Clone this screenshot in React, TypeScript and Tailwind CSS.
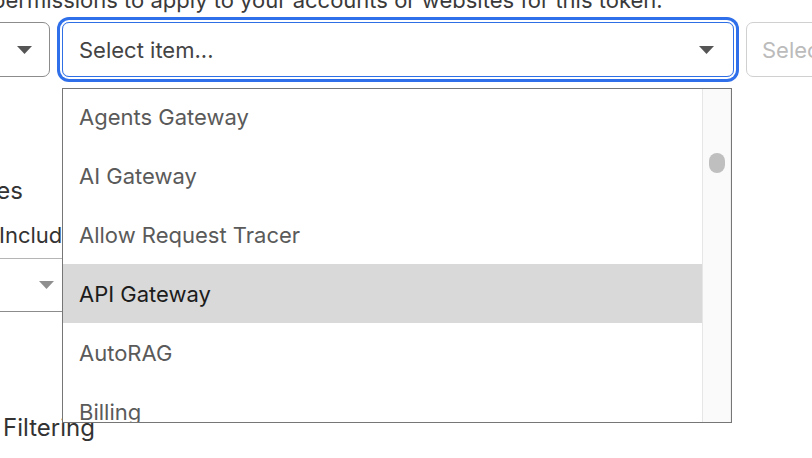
import React from 'react'

const Arrow = ({ color = '#555' }: { color?: string }) => (
    <svg width="15" height="8" viewBox="0 0 15 8" className="shrink-0">
        <polygon points="0,0 15,0 7.5,8" fill={color} />
    </svg>
)

const items = ['Agents Gateway', 'AI Gateway', 'Allow Request Tracer', 'API Gateway', 'AutoRAG', 'Billing', 'Cache Purge']

export default function App() {
    return (
        <div className="relative w-[812px] h-[458px] overflow-hidden bg-white text-[#333] font-['Inter','Liberation_Sans',sans-serif]">
            {/* description */}
            <p className="ml-[-8px] mt-[-14px] text-[22px] leading-[28px] whitespace-nowrap text-[#3a3a3a]">
                permissions to apply to your accounts or websites for this token.
            </p>

            {/* permission row */}
            <div className="flex items-start gap-3 mt-[8px]">
                <div className="ml-[-150px] w-[200px] h-[55px] shrink-0 flex items-center justify-end pr-[17px] border border-[#8c8c8c] rounded-[7px]">
                    <Arrow />
                </div>

                <div className="relative w-[672px] shrink-0">
                    <div className="h-[55px] flex items-center justify-between pl-[16px] pr-[19px] border border-[#2f6fe6] rounded-[7px] shadow-[0_0_0_2px_#ffffff,0_0_0_5px_#2f6fea]">
                        <span className="text-[22px] leading-[28px] text-[#444]">Select item...</span>
                        <Arrow />
                    </div>

                    {/* open menu */}
                    <div className="absolute left-0 top-[66px] z-10 w-[670px] h-[335px] flex bg-white border border-[#767676]">
                        <div className="flex-1 overflow-hidden">
                            <ul className="mt-[-2px]">
                                {items.map((item) => (
                                    <li
                                        key={item}
                                        className={
                                            item === 'API Gateway'
                                                ? 'h-[59px] flex items-center pl-[16px] text-[22px] leading-[28px] bg-[#d9d9d9] text-[#1c1c1c]'
                                                : 'h-[59px] flex items-center pl-[16px] text-[22px] leading-[28px] text-[#5a5a5a]'
                                        }
                                    >
                                        {item}
                                    </li>
                                ))}
                            </ul>
                        </div>
                        <div className="w-[29px] flex justify-center pt-[64px] bg-[#fafafa] border-l border-[#e6e6e6] border-r border-r-[#efefef]">
                            <div className="w-[16px] h-[20px] rounded-full bg-[#bfbfbf]" />
                        </div>
                    </div>
                </div>

                <div className="w-[200px] h-[55px] shrink-0 flex items-center pl-[15px] border border-[#d0d0d0] rounded-[7px]">
                    <span className="text-[22px] leading-[28px] text-[#bbbbbb] whitespace-nowrap">Select...</span>
                </div>
            </div>

            {/* resources section */}
            <div className="w-[23px] mt-[98px] flex justify-end">
                <h2 className="shrink-0 text-[24px] leading-[32px] text-[#333] whitespace-nowrap">Zone Resources</h2>
            </div>
            <p className="ml-[-1px] mt-[14px] text-[22px] leading-[28px] text-[#333] whitespace-nowrap">Include</p>
            <div className="mt-[9px] ml-[-150px] w-[222px] h-[54px] flex items-center justify-end pr-[17px] border border-[#8c8c8c] border-t-[#b5b5b5] rounded-[7px]">
                <Arrow color="#8f8f8f" />
            </div>

            <h2 className="ml-[3px] mt-[100px] text-[24px] leading-[32px] text-[#333] whitespace-nowrap">Filtering</h2>
        </div>
    )
}
